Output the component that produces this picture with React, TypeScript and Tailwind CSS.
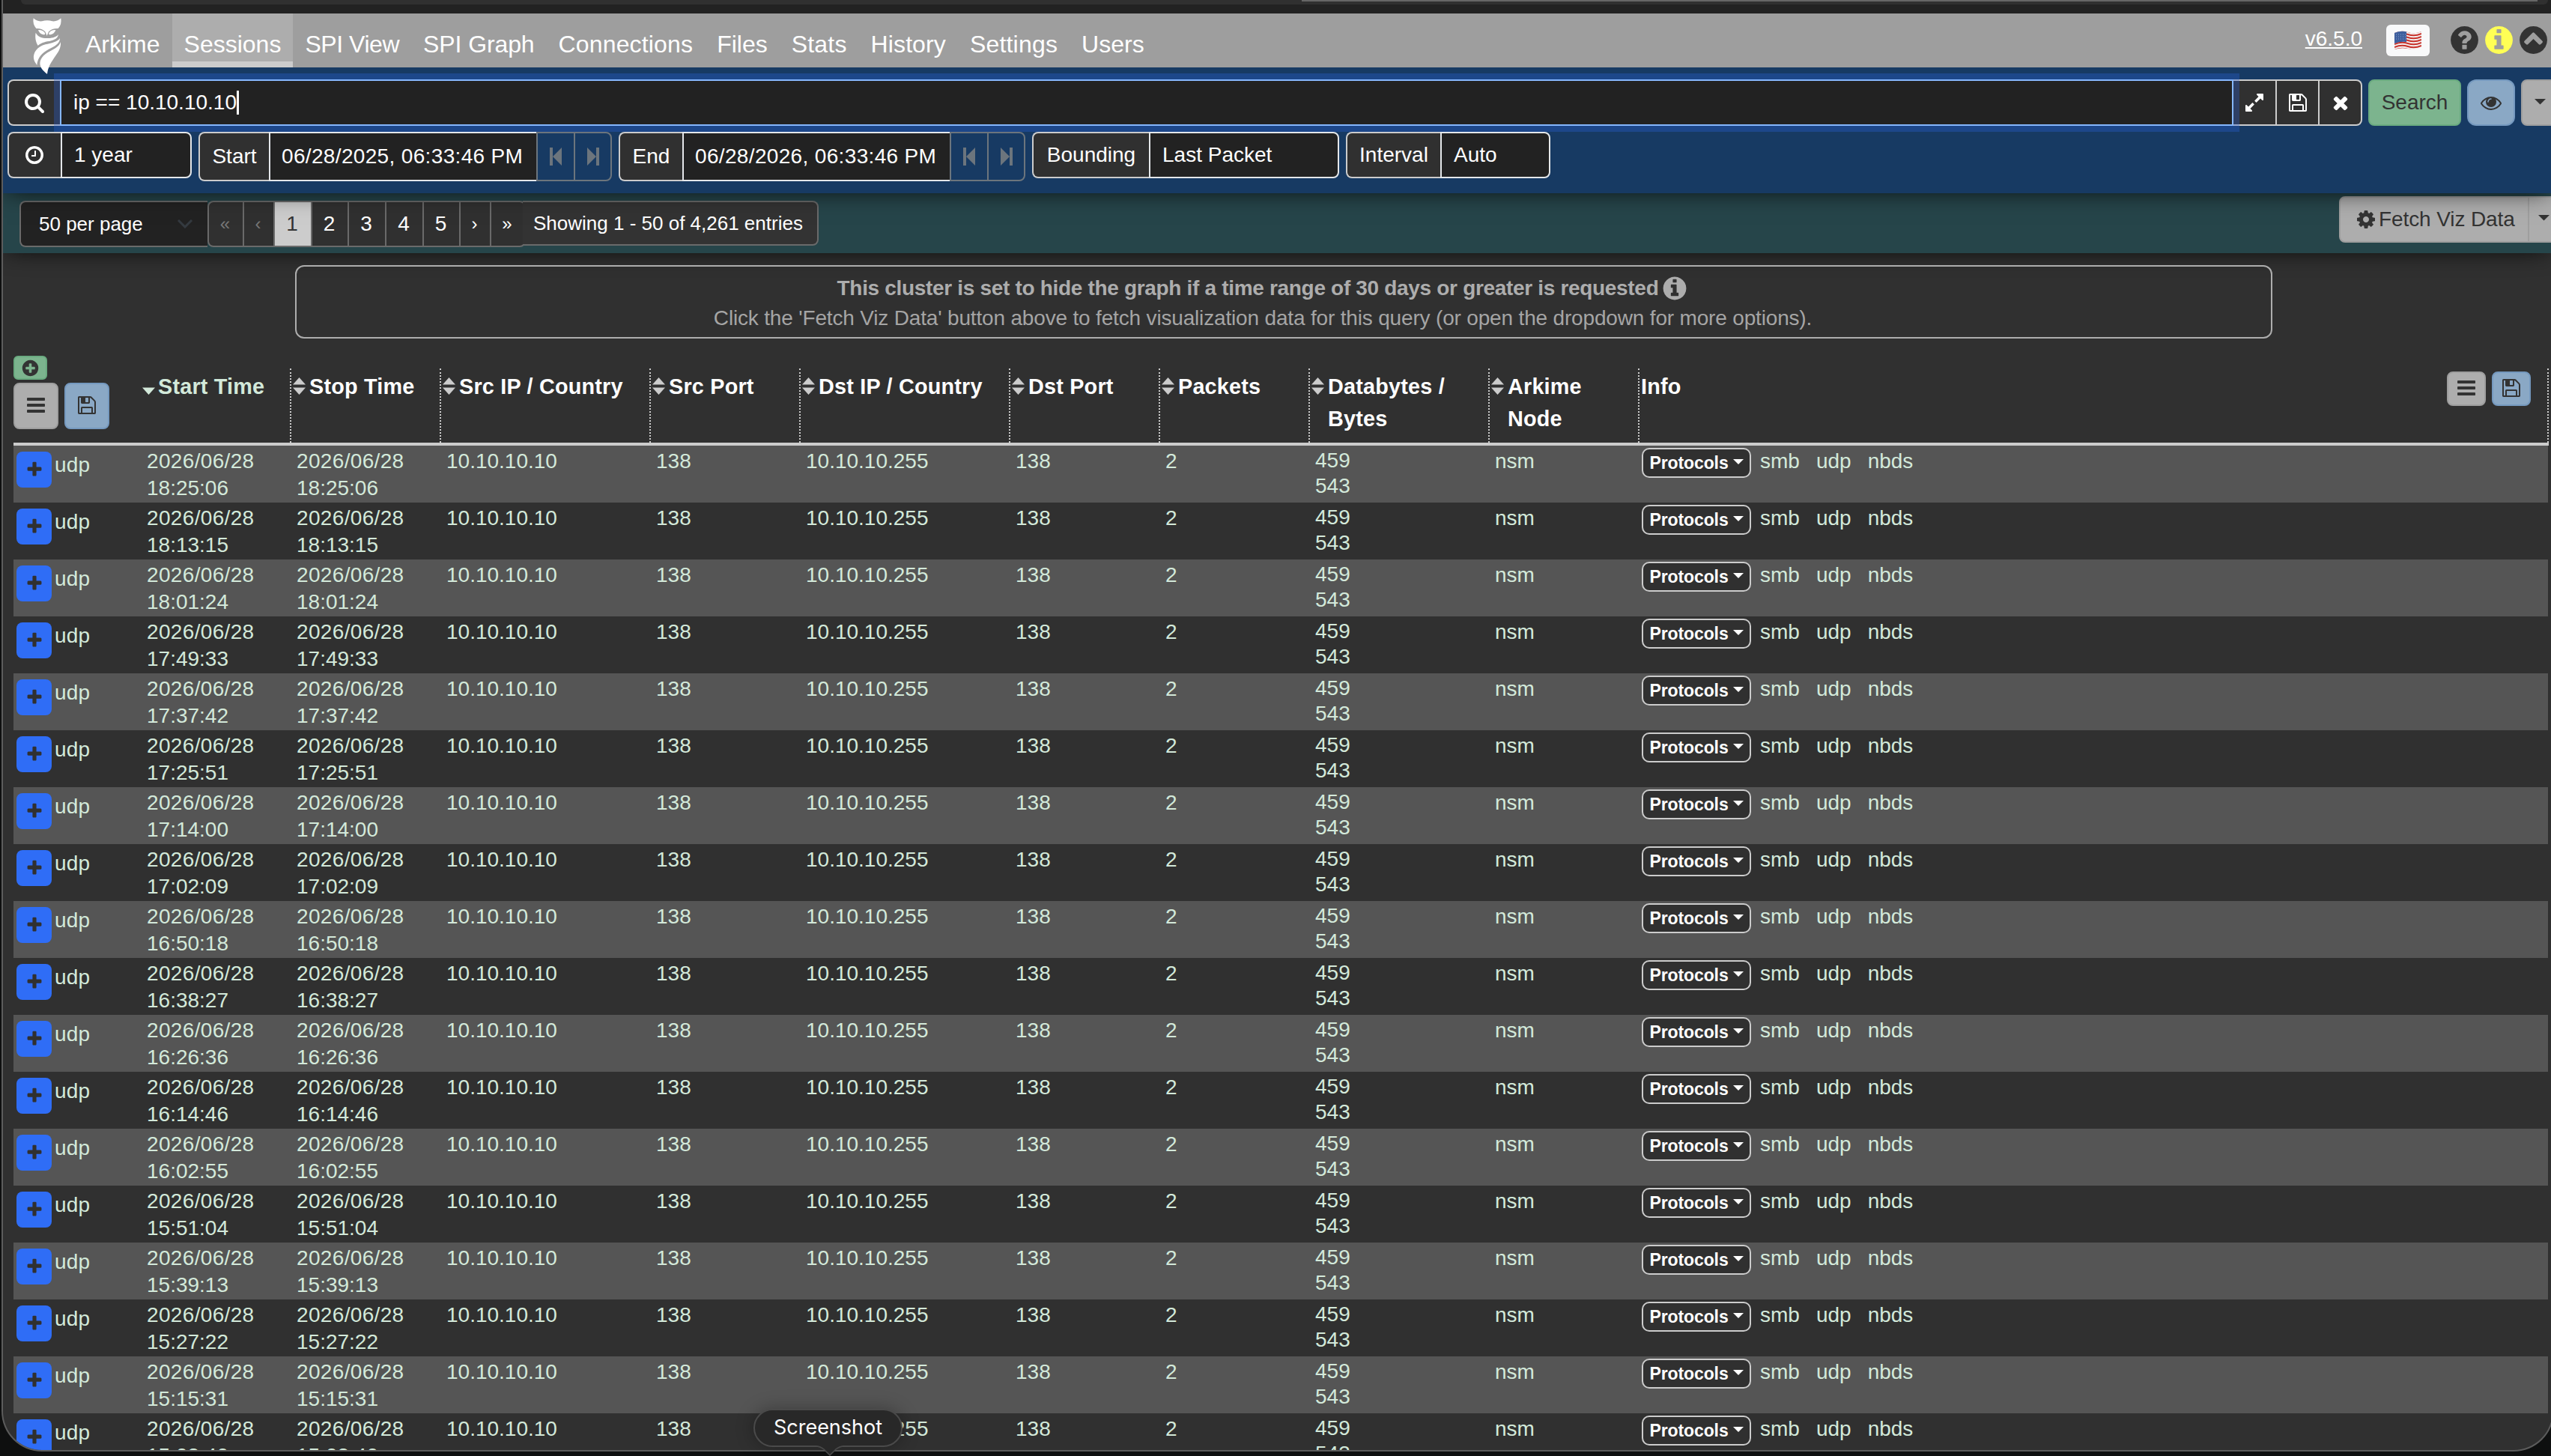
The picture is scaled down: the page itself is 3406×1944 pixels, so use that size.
import clsx from "clsx";

const disc =
  "q0 209-103 385.5t-279.5 279.5-385.5 103-385.5-103-279.5-279.5-103-385.5 103-385.5 279.5-279.5 385.5-103 385.5 103 279.5 279.5 103 385.5z";

// Font Awesome 4 glyphs on a 1792 grid
const icons = {
  info:
    "M1152 1376v-160q0-14-9-23t-23-9h-96v-512q0-14-9-23t-23-9h-320q-14 0-23 9t-9 23v160q0 14 9 23t23 9h96v320h-96q-14 0-23 9t-9 23v160q0 14 9 23t23 9h448q14 0 23-9t9-23zm-128-896v-160q0-14-9-23t-23-9h-192q-14 0-23 9t-9 23v160q0 14 9 23t23 9h192q14 0 23-9t9-23zm640 416" + disc,
  question:
    "M1024 1376v-192q0-14-9-23t-23-9h-192q-14 0-23 9t-9 23v192q0 14 9 23t23 9h192q14 0 23-9t9-23zm256-672q0-88-55.5-163t-138.5-116-170-41q-243 0-371 213-15 24 8 42l132 100q7 6 19 6 16 0 25-12 53-68 86-92 34-24 86-24 48 0 85.5 26t37.5 59q0 38-20 61t-68 45q-63 28-115.5 86.5t-52.5 125.5v36q0 14 9 23t23 9h192q14 0 23-9t9-23q0-19 21.5-49.5t54.5-49.5q32-18 49-28.5t46-35 44.5-48 28-60.5 12.5-81zm384 192" + disc,
  up: "M1293 1139l102-102q19-19 19-45t-19-45l-454-454q-19-19-45-19t-45 19l-454 454q-19 19-19 45t19 45l102 102q19 19 45 19t45-19l307-307 307 307q19 19 45 19t45-19zm371-243" + disc,
  plusCircle:
    "M1344 960v-128q0-26-19-45t-45-19h-256v-256q0-26-19-45t-45-19h-128q-26 0-45 19t-19 45v256h-256q-26 0-45 19t-19 45v128q0 26 19 45t45 19h256v256q0 26 19 45t45 19h128q26 0 45-19t19-45v-256h256q26 0 45-19t19-45zm320-64" + disc,
  clock:
    "M1024 544v448q0 14-9 23t-23 9h-320q-14 0-23-9t-9-23v-64q0-14 9-23t23-9h224v-352q0-14 9-23t23-9h64q14 0 23 9t9 23zm416 352q0-148-73-273t-198-198-273-73-273 73-198 198-73 273 73 273 198 198 273 73 273-73 198-198 73-273zm224 0" + disc,
  search:
    "M1216 832q0-185-131.5-316.5t-316.5-131.5-316.5 131.5-131.5 316.5 131.5 316.5 316.5 131.5 316.5-131.5 131.5-316.5zm512 832q0 52-38 90t-90 38q-54 0-90-38l-343-342q-179 124-399 124-143 0-273.5-55.5t-225-150-150-225-55.5-273.5 55.5-273.5 150-225 225-150 273.5-55.5 273.5 55.5 225 150 150 225 55.5 273.5q0 220-124 399l343 343q37 37 37 90z",
  save:
    "M512 1536h768v-384h-768v384zm896 0h128v-896q0-14-10-38.5t-20-34.5l-281-281q-10-10-34-20t-39-10v416q0 40-28 68t-68 28h-576q-40 0-68-28t-28-68v-416h-128v1280h128v-416q0-40 28-68t68-28h832q40 0 68 28t28 68v416zm-384-928v-320q0-13-9.5-22.5t-22.5-9.5h-192q-13 0-22.5 9.5t-9.5 22.5v320q0 13 9.5 22.5t22.5 9.5h192q13 0 22.5-9.5t9.5-22.5zm640 32v928q0 40-28 68t-68 28h-1344q-40 0-68-28t-28-68v-1344q0-40 28-68t68-28h928q40 0 88 20t76 48l280 280q28 28 48 76t20 88z",
  close:
    "M1490 1322q0 40-28 68l-136 136q-28 28-68 28t-68-28l-294-294-294 294q-28 28-68 28t-68-28l-136-136q-28-28-28-68t28-68l294-294-294-294q-28-28-28-68t28-68l136-136q28-28 68-28t68 28l294 294 294-294q28-28 68-28t68 28l136 136q28 28 28 68t-28 68l-294 294 294 294q28 28 28 68z",
  eye: "M1664 960q-152-236-381-353 61 104 61 225 0 185-131.5 316.5t-316.5 131.5-316.5-131.5-131.5-316.5q0-121 61-225-229 117-381 353 133 205 333.5 326.5t434.5 121.5 434.5-121.5 333.5-326.5zm-720-384q0-20-14-34t-34-14q-125 0-214.5 89.5t-89.5 214.5q0 20 14 34t34 14 34-14 14-34q0-86 61-147t147-61q20 0 34-14t14-34zm848 384q0 34-20 69-140 230-376.5 368.5t-499.5 138.5-499.5-139-376.5-368q-20-35-20-69t20-69q140-229 376.5-368t499.5-139 499.5 139 376.5 368q20 35 20 69z",
  cog: "M1152 896q0-106-75-181t-181-75-181 75-75 181 75 181 181 75 181-75 75-181zm512-109v222q0 12-8 23t-20 13l-185 28q-19 54-39 91 35 50 107 138 10 12 10 25t-9 23q-27 37-99 108t-94 71q-12 0-26-9l-138-108q-44 23-91 38-16 136-29 186-7 28-36 28h-222q-14 0-24.5-8.5t-11.5-21.5l-28-184q-49-16-90-37l-141 107q-10 9-25 9-14 0-25-11-126-114-165-168-7-10-7-23 0-12 8-23 15-21 51-66.5t54-70.5q-27-50-41-99l-183-27q-13-2-21-12.5t-8-23.5v-222q0-12 8-23t19-13l186-28q14-46 39-92-40-57-107-138-10-12-10-24 0-10 9-23 26-36 98.5-107.5t94.5-71.5q13 0 26 10l138 107q44-23 91-38 16-136 29-186 7-28 36-28h222q14 0 24.5 8.5t11.5 21.5l28 184q49 16 90 37l142-107q9-9 24-9 13 0 25 10 129 119 165 170 7 8 7 22 0 12-8 23-15 21-51 66.5t-54 70.5q26 50 41 98l183 28q13 2 21 12.5t8 23.5z",
  bars: "M1664 1344v128q0 26-19 45t-45 19h-1408q-26 0-45-19t-19-45v-128q0-26 19-45t45-19h1408q26 0 45 19t19 45zm0-512v128q0 26-19 45t-45 19h-1408q-26 0-45-19t-19-45v-128q0-26 19-45t45-19h1408q26 0 45 19t19 45zm0-512v128q0 26-19 45t-45 19h-1408q-26 0-45-19t-19-45v-128q0-26 19-45t45-19h1408q26 0 45 19t19 45z",
  expand:
    "M883 1056q0 13-10 23l-332 332 144 144q19 19 19 45t-19 45-45 19h-448q-26 0-45-19t-19-45v-448q0-26 19-45t45-19 45 19l144 144 332-332q10-10 23-10t23 10l114 114q10 10 10 23zm781-864v448q0 26-19 45t-45 19-45-19l-144-144-332 332q-10 10-23 10t-23-10l-114-114q-10-10-10-23t10-23l332-332-144-144q-19-19-19-45t19-45 45-19h448q26 0 45 19t19 45z",
  plus: "M1600 736v192q0 40-28 68t-68 28h-416v416q0 40-28 68t-68 28h-192q-40 0-68-28t-28-68v-416h-416q-40 0-68-28t-28-68v-192q0-40 28-68t68-28h416v-416q0-40 28-68t68-28h192q40 0 68 28t28 68v416h416q40 0 68 28t28 68z",
};

function Icon({ name, className = "size-7" }: { name: keyof typeof icons; className?: string }) {
  return (
    <svg viewBox="0 0 1792 1792" fill="currentColor" className={clsx("shrink-0", className)}>
      <path d={icons[name]} />
    </svg>
  );
}

function Caret({ className = "w-[15px]" }: { className?: string }) {
  return (
    <svg viewBox="0 0 16 8" fill="currentColor" className={clsx("shrink-0", className)}>
      <path d="M0 0h16l-8 8z" />
    </svg>
  );
}

function Owl() {
  return (
    <svg viewBox="0 0 210 270" fill="#fff" className="relative z-10 -mt-[3px] -mb-[15px] ml-[26px] h-[90px] w-[70px] shrink-0">
      <path d="M44 28Q58 42 78 40Q99 33 120 40Q140 42 154 28Q158 54 143 69Q118 68 105 82L98 98L91 82Q78 68 55 69Q40 52 44 28Z" />
      <path d="M63 75Q82 74 90 87Q92 95 84 94Q68 91 63 75ZM133 75Q114 74 106 87Q104 95 112 94Q128 91 133 75Z" />
      <path d="M53 86C62 104 84 110 104 108C122 107 138 102 144 92C141 112 122 117 100 121C80 126 70 130 62 138C52 120 50 104 53 86Z" />
      <path d="M150 108C142 122 115 128 92 133C60 141 42 165 45 190C47 202 54 210 58 216C60 186 78 167 105 152C130 140 150 130 150 108Z" />
      <path d="M153 123C146 145 122 152 100 166C76 182 66 200 72 220C78 236 92 246 99 252C102 225 112 210 125 190C142 165 155 150 153 123Z" />
    </svg>
  );
}

function Flag() {
  return (
    <svg viewBox="0 0 36 26" className="h-[26px] w-9">
      <clipPath id="wave">
        <path d="M0 3Q9 -1 18 2T36 1V22Q27 26 18 24T0 25Z" />
      </clipPath>
      <g clipPath="url(#wave)">
        <rect width="36" height="26" fill="#f3eeee" />
        {[1, 5, 9, 13, 17, 21, 25].map((y) => (
          <path key={y} d={`M0 ${y + 1}Q9 ${y - 3} 18 ${y}T36 ${y - 1}`} fill="none" stroke="#c8322b" strokeWidth="2" />
        ))}
        <path d="M0 0H16V15Q8 14 0 17Z" fill="#3e5f9e" />
        <path d="M2 5h13M2 8h13M2 11h13" stroke="#8ba3cf" strokeWidth="1" strokeDasharray="1 2" />
      </g>
    </svg>
  );
}

const tabs = [
  { label: "Arkime" },
  { label: "Sessions", active: true },
  { label: "SPI View", tracking: "tracking-[-0.45px]" },
  { label: "SPI Graph", tracking: "tracking-[-0.1px]" },
  { label: "Connections", tracking: "tracking-[0.15px]" },
  { label: "Files" },
  { label: "Stats", tracking: "tracking-[0.2px]" },
  { label: "History", tracking: "tracking-[0.1px]" },
  { label: "Settings", tracking: "tracking-[0.2px]" },
  { label: "Users" },
];

function Navbar() {
  return (
    <nav className="flex h-[72px] bg-[#9e9e9e] text-[32px] text-white">
      <Owl />
      <div className="-ml-0.5 flex">
        {tabs.map((tab) => (
          <a
            key={tab.label}
            className={clsx(
              "border-b-8 px-4 pt-[18px] leading-[46px] whitespace-nowrap",
              tab.tracking,
              tab.active ? "border-[#ccc] bg-[#adadad]" : "border-transparent"
            )}
          >
            {tab.label}
          </a>
        ))}
      </div>
      <div className="mr-1 ml-auto flex shrink-0 items-start">
        <a className="mt-[13px] text-[28px] leading-[42px] underline decoration-2 underline-offset-2">v6.5.0</a>
        <div className="mt-[15px] ml-8 flex h-[42px] w-[58px] items-center justify-center rounded-md bg-[#f8f9fa]">
          <Flag />
        </div>
        <div className="mt-[14px] ml-[25px] flex gap-[3px] text-[#333]">
          <Icon name="question" className="size-[43px]" />
          <Icon name="info" className="size-[43px] text-[#ffff55]" />
          <Icon name="up" className="size-[43px]" />
        </div>
      </div>
    </nav>
  );
}

function SearchRow() {
  return (
    <div className="flex h-[62px] text-[28px]">
      <div className="flex w-[70px] shrink-0 items-center justify-center rounded-l-lg border-2 border-r-0 border-[#ccc] bg-[#303030]">
        <Icon name="search" />
      </div>
      <div className="z-10 flex w-[2902px] shrink-0 items-center border-2 border-[#86b7fe] bg-[#222] pl-4 shadow-[0_0_0_8px_rgba(44,100,220,0.32)]">
        ip == 10.10.10.10
        <span className="h-8 w-[3px] bg-white" />
      </div>
      <div className="flex w-[172px] shrink-0 rounded-r-lg border-2 border-l-0 border-[#ccc] bg-[#303030]">
        <div className="flex w-[58px] items-center justify-center border-r-2 border-[#ccc]"><Icon name="expand" /></div>
        <div className="flex w-[57px] items-center justify-center border-r-2 border-[#ccc]"><Icon name="save" /></div>
        <div className="flex flex-1 items-center justify-center"><Icon name="close" /></div>
      </div>
      <button className="ml-2 w-[124px] shrink-0 rounded-lg border-2 border-[#6aab80] bg-[#7cb48e] text-[#333]">Search</button>
      <button className="ml-2 flex w-16 shrink-0 items-center justify-center rounded-xl border-2 border-[#7599bf] bg-[#8aa8c5] text-[#333]">
        <Icon name="eye" />
      </button>
      <button className="ml-2 flex w-[52px] shrink-0 items-center rounded-l-lg border-2 border-[#9e9e9e] bg-[#adadad] pb-0.5 pl-4 text-[#333]">
        <Caret />
      </button>
    </div>
  );
}

function StepIcon({ flip }: { flip?: boolean }) {
  return (
    <svg viewBox="0 0 16 24" fill="#6c757d" className={clsx("h-6 w-4", flip && "-scale-x-100")}>
      <path d="M0 0h4v24H0zM4 12L16 0v24z" />
    </svg>
  );
}

function DateGroup({ label, value, className }: { label: string; value: string; className: string }) {
  return (
    <div className="flex h-[66px]">
      <div className={clsx("flex shrink-0 items-center justify-center rounded-l-lg border-2 border-r-0 border-[#ccc] bg-[#303030]", className)}>
        {label}
      </div>
      <div className="flex w-[357px] items-center border-2 border-r-0 border-[#e4e7ea] bg-[#222] pl-[15px] tracking-[0.34px] whitespace-nowrap">{value}</div>
      <div className="flex w-[50px] items-center justify-center border-2 border-r-0 border-[#6c757d]"><StepIcon /></div>
      <div className="flex w-[51px] items-center justify-center rounded-r-lg border-2 border-[#6c757d]"><StepIcon flip /></div>
    </div>
  );
}

function SelectGroup({ label, value, labelClass, valueClass }: { label: React.ReactNode; value: string; labelClass: string; valueClass: string }) {
  return (
    <div className="flex h-[62px]">
      <div className={clsx("flex items-center justify-center rounded-l-lg border-2 border-r-0 border-[#ccc] bg-[#303030]", labelClass)}>{label}</div>
      <div className={clsx("flex items-center rounded-r-lg border-2 border-[#e4e7ea] bg-[#222] pl-4", valueClass)}>{value}</div>
    </div>
  );
}

function SearchArea() {
  return (
    <section className="relative h-[168px] bg-[#173a63] pt-4 pl-1.5 text-white shadow-[0_0_32px_-6px_#000]">
      <SearchRow />
      <div className="mt-2 flex gap-[9px] text-[28px]">
        <SelectGroup label={<Icon name="clock" />} value="1 year" labelClass="w-[71px] pr-px" valueClass="w-[175px]" />
        <DateGroup label="Start" value="06/28/2025, 06:33:46 PM" className="w-[94px]" />
        <DateGroup label="End" value="06/28/2026, 06:33:46 PM" className="w-[85px]" />
        <SelectGroup label="Bounding" value="Last Packet" labelClass="w-[156px]" valueClass="w-[254px]" />
        <SelectGroup label="Interval" value="Auto" labelClass="w-[126px]" valueClass="w-[147px]" />
      </div>
    </section>
  );
}

const pages = [
  { label: "«", width: "w-[47px] rounded-l-lg text-2xl", tone: "text-[#777]" },
  { label: "‹", width: "w-[41px] text-2xl", tone: "text-[#777]" },
  { label: "1", width: "w-[50px]", tone: "bg-[#ccc] text-[#333]" },
  { label: "2", width: "w-[49px]", tone: "" },
  { label: "3", width: "w-[50px]", tone: "" },
  { label: "4", width: "w-[50px]", tone: "" },
  { label: "5", width: "w-[49px]", tone: "" },
  { label: "›", width: "w-[41px] text-2xl", tone: "" },
  { label: "»", width: "w-[48px] rounded-r-lg border-r-2 text-2xl", tone: "" },
];

function PagingBar() {
  return (
    <section className="flex h-20 items-start bg-[#26454a] text-[26px] text-white shadow-[0_0_32px_-6px_#000]">
      <div className="mt-2.5 ml-[22px] flex">
        <div className="flex h-[62px] w-[251px] items-center justify-between rounded-l-lg border-2 border-r-0 border-[#6a6a6a] bg-[#222] pr-5 pl-6">
          50 per page
          <svg viewBox="0 0 20 12" className="w-5" fill="none" stroke="#343a40" strokeWidth="3">
            <path d="M1 1l9 9 9-9" />
          </svg>
        </div>
        <div className="-mr-1 flex h-[62px] text-[28px]">
          {pages.map((p) => (
            <div key={p.label} className={clsx("flex items-center justify-center border-y-2 border-l-2 border-[#6a6a6a] pr-0.5", p.width, p.tone || "text-white", p.label !== "1" && "bg-[#303030]")}>
              {p.label}
            </div>
          ))}
        </div>
        <div className="flex h-[60px] w-[395px] items-center rounded-r-lg border-2 border-l-0 border-[#6a6a6a] bg-[#333] pl-3.5">
          Showing 1 - 50 of 4,261 entries
        </div>
      </div>
      <div className="mt-1 -mr-[11px] ml-auto flex h-[62px] rounded-l-lg border-2 border-[#9e9e9e] bg-[#adadad] text-[28px] text-[#333]">
        <div className="flex w-[252px] items-center border-r-2 border-[#9e9e9e] pl-5">
          <Icon name="cog" />
          <span className="ml-[3px] tracking-[-0.1px]">Fetch Viz Data</span>
        </div>
        <div className="flex w-[40px] items-center pb-1 pl-3"><Caret /></div>
      </div>
    </section>
  );
}

function Notice() {
  return (
    <div className="mt-4 ml-[390px] flex h-[98px] w-[2640px] flex-col items-center rounded-xl border-2 border-[#adadad] pt-2 pr-14 text-[28px] text-[#adadad]">
      <div className="flex h-[42px] items-center gap-1 font-bold tracking-[-0.32px]">
        <span>This cluster is set to hide the graph if a time range of 30 days or greater is requested</span>
        <Icon name="info" className="size-9" />
      </div>
      <div className="leading-[38px] tracking-[-0.17px] text-[#a5a5a5]">
        Click the &apos;Fetch Viz Data&apos; button above to fetch visualization data for this query (or open the dropdown for more options).
      </div>
    </div>
  );
}

const columns = [
  { label: "Start Time", width: "w-[200px]", sorted: true },
  { label: "Stop Time", width: "w-[200px]" },
  { label: "Src IP / Country", width: "w-[280px]" },
  { label: "Src Port", width: "w-[200px]" },
  { label: "Dst IP / Country", width: "w-[280px]" },
  { label: "Dst Port", width: "w-[200px]" },
  { label: "Packets", width: "w-[200px]" },
  { label: "Databytes / Bytes", width: "w-[240px]" },
  { label: "Arkime Node", width: "w-[200px]" },
];

function TableHead() {
  return (
    <div className="mt-[23px] ml-3.5 flex h-[120px] w-[3385px] items-end border-b-4 border-[#ccc] text-[28.8px] font-bold tracking-[0.2px] text-white">
      <div className="flex h-full w-[171px] flex-col items-start text-[#333]">
        <button className="flex h-8 w-[45px] items-center justify-center rounded-md border-2 border-[#6aab80] bg-[#7cb48e]">
          <Icon name="plusCircle" className="size-[25px]" />
        </button>
        <div className="mt-1 flex gap-2">
          <button className="flex h-[62px] w-[60px] items-center justify-center rounded-lg border-2 border-[#9e9e9e] bg-[#adadad] pb-0.5"><Icon name="bars" /></button>
          <button className="flex h-[62px] w-[60px] items-center justify-center rounded-lg border-2 border-[#7599bf] bg-[#8aa8c5] pb-0.5"><Icon name="save" /></button>
        </div>
      </div>
      {columns.map((col) => (
        <div key={col.label} className={clsx("flex h-[99px] shrink-0 border-r-2 border-dotted border-[#ccc] pt-[3px]", col.sorted ? "pl-px" : "pl-0.5", col.width)}>
          <svg viewBox="0 0 17 23" className={clsx("mt-[9px] h-[23px] w-[17px] shrink-0", col.sorted ? "fill-[#d3e9da]" : "fill-[#ccc]")}>
            {!col.sorted && <path d="M0 9.500h17L8.500 0z" />}
            <path d="M0 13.500h17l-8.500 9.500z" />
          </svg>
          <span className={clsx("leading-[43px]", col.sorted ? "ml-1 text-[#d3e9da]" : "ml-[5px]")}>{col.label}</span>
        </div>
      ))}
      <div className="flex h-[99px] flex-1 border-r-2 border-dotted border-[#ccc] pt-[3px] pl-0.5">
        <span className="leading-[43px]">Info</span>
        <div className="mt-px mr-[22px] ml-auto flex gap-2 text-[#333]">
          <button className="flex h-[46px] w-[52px] items-center justify-center rounded-lg border-2 border-[#9e9e9e] bg-[#adadad] pb-0.5"><Icon name="bars" /></button>
          <button className="flex h-[46px] w-[52px] items-center justify-center rounded-lg border-2 border-[#7599bf] bg-[#8aa8c5] pb-0.5"><Icon name="save" /></button>
        </div>
      </div>
    </div>
  );
}

const times = [
  "18:25:06", "18:13:15", "18:01:24", "17:49:33", "17:37:42", "17:25:51",
  "17:14:00", "17:02:09", "16:50:18", "16:38:27", "16:26:36", "16:14:46",
  "16:02:55", "15:51:04", "15:39:13", "15:27:22", "15:15:31", "15:03:40",
];

function DateCell({ time }: { time: string }) {
  return (
    <div className="w-[200px] pt-[3px] pl-[7px] leading-9">
      <div className="tracking-[0.34px]">2026/06/28</div>
      <div>{time}</div>
    </div>
  );
}

function SessionRow({ time }: { time: string }) {
  return (
    <div className="ml-3.5 flex h-[76px] w-[3384px] text-[28px] leading-9 text-[#d3e9da] odd:bg-[#555]">
      <div className="flex w-[171px] shrink-0 pl-1">
        <button className="mt-2 flex h-12 w-[47px] items-center justify-center rounded-lg bg-[#2f6df6] text-[#303030]">
          <Icon name="plus" className="size-6" />
        </button>
        <span className="ml-1 pt-2 tracking-[0.2px]">udp</span>
      </div>
      <DateCell time={time} />
      <DateCell time={time} />
      <div className="w-[280px] pt-[3px] pl-[7px]">10.10.10.10</div>
      <div className="w-[200px] pt-[3px] pl-[7px]">138</div>
      <div className="w-[280px] pt-[3px] pl-[7px]">10.10.10.255</div>
      <div className="w-[200px] pt-[3px] pl-[7px]">138</div>
      <div className="w-[200px] pt-[3px] pl-[7px]">2</div>
      <div className="w-[240px] pt-[3px] pl-[7px] leading-[34px]">
        <div>459</div>
        <div>543</div>
      </div>
      <div className="w-[200px] pt-[3px] pl-[7px]">nsm</div>
      <div className="flex items-start gap-[22px] pl-[3px]">
        <button className="mt-[3px] -mr-2.5 flex h-10 w-[146px] items-center justify-center gap-1.5 rounded-[10px] border-2 border-[#ccc] bg-[#303030] text-[23px] font-bold tracking-[-0.1px] text-white">
          Protocols
          <Caret className="mb-1 w-[14px]" />
        </button>
        <span className="pt-[3px]">smb</span>
        <span className="pt-[3px]">udp</span>
        <span className="pt-[3px]">nbds</span>
      </div>
    </div>
  );
}

export default function App() {
  return (
    <div className="relative h-[1944px] w-[3406px] overflow-hidden bg-[#0e0f0f] pl-0.5 font-['Liberation_Sans',Arial,sans-serif]">
      <div className="h-[1938px] w-[3408px] overflow-hidden rounded-b-[54px] border-2 border-t-0 border-[#5c5c5c] bg-[#303030]">
        {/* bottom edge of the browser toolbar */}
        <div className="h-[18px] bg-[#222]">
          <div className="ml-6 h-1.5 w-[3374px] rounded-b-md bg-[#303030]">
            <div className="ml-[1710px] h-0.5 w-[1650px] bg-[#666]" />
          </div>
        </div>
        <div className="relative z-20"><Navbar /></div>
        <div className="relative z-10"><SearchArea /></div>
        <PagingBar />
        <Notice />
        <TableHead />
        <div>
          {times.map((time) => (
            <SessionRow key={time} time={time} />
          ))}
        </div>
      </div>

      {/* dock tooltip */}
      <div className="absolute top-[1881px] left-[1006px] flex h-[51px] w-[199px] items-center justify-center rounded-full border-2 border-[#4a4a4a] bg-[#282828] font-[Inter,sans-serif] text-[27px] text-white shadow-[0_0_24px_rgba(0,0,0,0.3)]">
        Screenshot
        <svg viewBox="0 0 36 14" className="absolute -bottom-[14px] left-[82px] h-[14px] w-9">
          <path d="M0 0Q8 1 12 7L18 13L24 7Q28 1 36 0Z" fill="#282828" />
          <path d="M0 1Q8 2 12 7L18 13L24 7Q28 2 36 1" fill="none" stroke="#4a4a4a" strokeWidth="1.5" />
        </svg>
      </div>
    </div>
  );
}
